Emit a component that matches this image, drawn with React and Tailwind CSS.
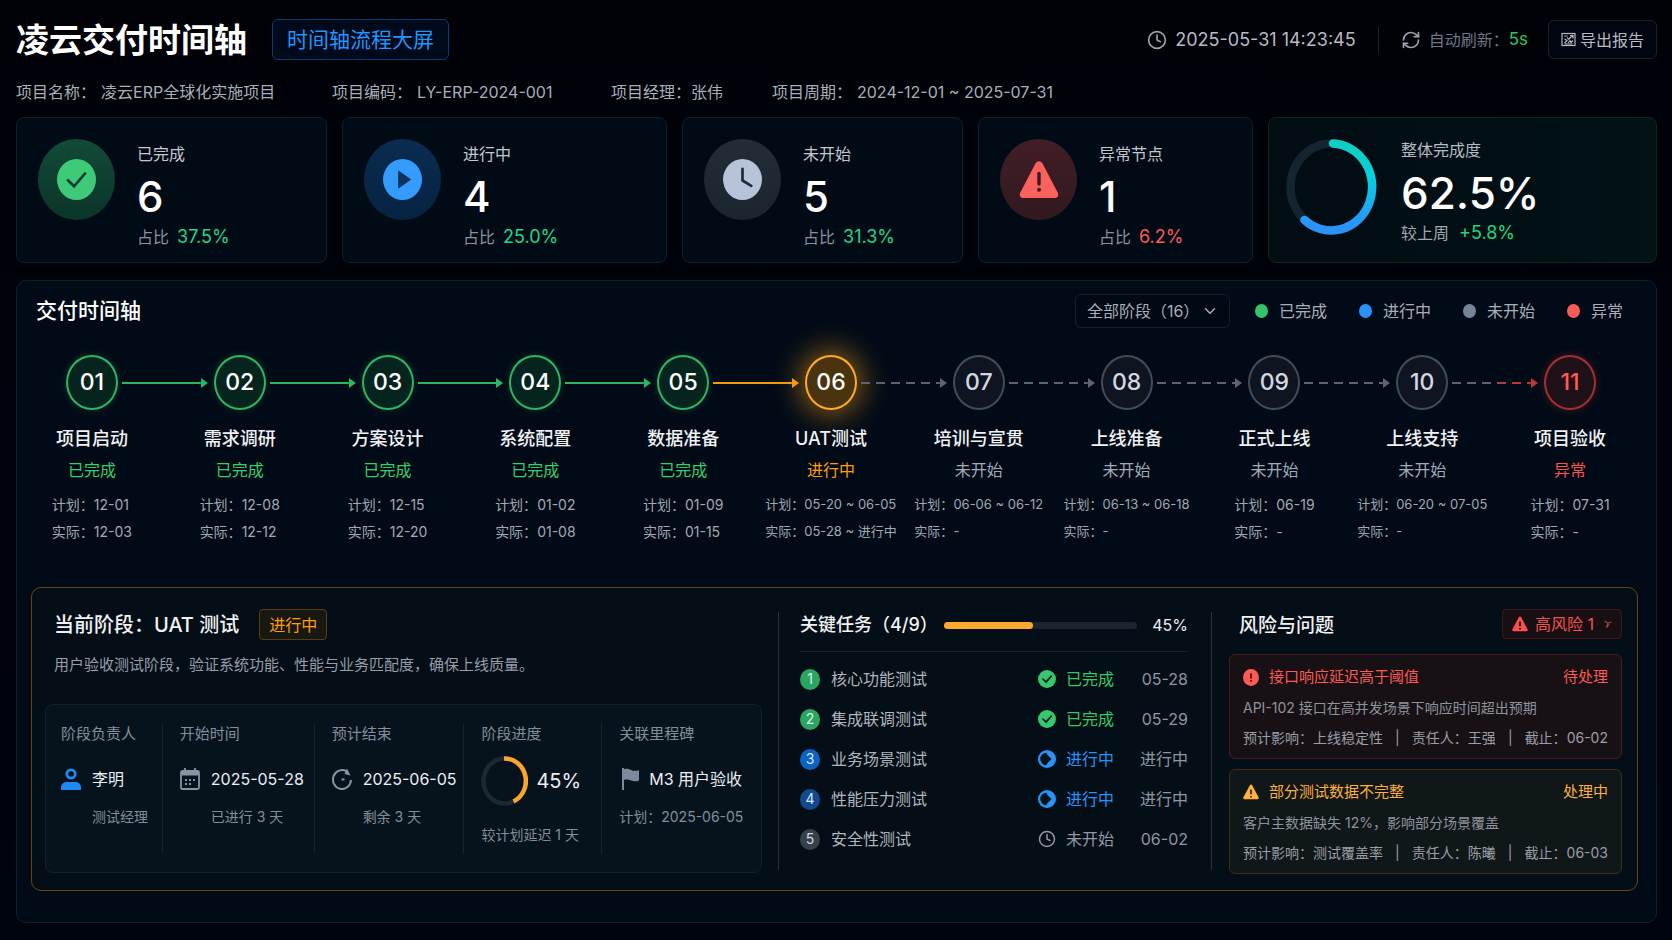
import { Clock, RefreshCw, ChevronDown } from "lucide-react";

const summary = [
  { label: "已完成", value: "6", share: "37.5%", kind: "done", halo: "bg-linear-to-b from-[#124a38] to-[#0b3529]", tone: "text-[#1fd68a]" },
  { label: "进行中", value: "4", share: "25.0%", kind: "active", halo: "bg-linear-to-b from-[#0a2c50] to-[#062342]", tone: "text-[#1fd68a]" },
  { label: "未开始", value: "5", share: "31.3%", kind: "idle", halo: "bg-linear-to-b from-[#222d38] to-[#1a2530]", tone: "text-[#1fd68a]" },
  { label: "异常节点", value: "1", share: "6.2%", kind: "error", halo: "bg-linear-to-b from-[#421e25] to-[#30191f]", tone: "text-[#fb5a55]" },
];

const steps = [
  { no: "01", name: "项目启动", state: "done", plan: "12-01", real: "12-03" },
  { no: "02", name: "需求调研", state: "done", plan: "12-08", real: "12-12" },
  { no: "03", name: "方案设计", state: "done", plan: "12-15", real: "12-20" },
  { no: "04", name: "系统配置", state: "done", plan: "01-02", real: "01-08" },
  { no: "05", name: "数据准备", state: "done", plan: "01-09", real: "01-15" },
  { no: "06", name: "UAT测试", state: "active", plan: "05-20 ~ 06-05", real: "05-28 ~ 进行中" },
  { no: "07", name: "培训与宣贯", state: "idle", plan: "06-06 ~ 06-12", real: "-" },
  { no: "08", name: "上线准备", state: "idle", plan: "06-13 ~ 06-18", real: "-" },
  { no: "09", name: "正式上线", state: "idle", plan: "06-19", real: "-" },
  { no: "10", name: "上线支持", state: "idle", plan: "06-20 ~ 07-05", real: "-" },
  { no: "11", name: "项目验收", state: "error", plan: "07-31", real: "-" },
];

const stepStyle = {
  done: {
    label: "已完成",
    text: "text-[#36cf6c]",
    node: "border-[#2db563] bg-[#06241e] text-white shadow-[0_0_8px_rgba(45,181,99,0.2)]",
    link: "#2db563",
  },
  active: {
    label: "进行中",
    text: "text-[#ff9d0a]",
    node: "border-[#ffab24] bg-[#4a3410] text-white shadow-[0_0_28px_6px_rgba(255,160,20,0.5)]",
    link: "#f59a0c",
  },
  idle: {
    label: "未开始",
    text: "text-[#a3a9b8]",
    node: "border-[#434b5a] bg-[#0e1420] text-[#d3d7e0]",
    link: "#5b6474",
  },
  error: {
    label: "异常",
    text: "text-[#ff4f4a]",
    node: "border-[#a32f33] bg-[#1f1118] text-[#ff5a55] shadow-[0_0_10px_rgba(200,50,50,0.3)]",
    link: "#b8393b",
  },
};

const legend = [
  { label: "已完成", dot: "bg-[#35c46e]" },
  { label: "进行中", dot: "bg-[#2b92fa]" },
  { label: "未开始", dot: "bg-[#77839b]" },
  { label: "异常", dot: "bg-[#f95c58]" },
];

const tasks = [
  { no: 1, name: "核心功能测试", state: "done", date: "05-28", badge: "bg-[#2ba562] text-[#d5f5e1]" },
  { no: 2, name: "集成联调测试", state: "done", date: "05-29", badge: "bg-[#2ba562] text-[#d5f5e1]" },
  { no: 3, name: "业务场景测试", state: "active", date: "进行中", badge: "bg-[#0d63c4] text-[#d8e9ff]" },
  { no: 4, name: "性能压力测试", state: "active", date: "进行中", badge: "bg-[#124a8c] text-[#d8e9ff]" },
  { no: 5, name: "安全性测试", state: "idle", date: "06-02", badge: "bg-[#37404b] text-[#d3d7e0]" },
];

const taskState = {
  done: { label: "已完成", text: "text-[#2fcb68]" },
  active: { label: "进行中", text: "text-[#2493fa]" },
  idle: { label: "未开始", text: "text-[#9299a6]" },
};

const risks = [
  {
    title: "接口响应延迟高于阈值",
    status: "待处理",
    desc: "API-102 接口在高并发场景下响应时间超出预期",
    impact: "上线稳定性",
    owner: "王强",
    due: "06-02",
    level: "high",
    box: "border-[#4a1a20] bg-[#171116]",
    tone: "text-[#fb5a55]",
  },
  {
    title: "部分测试数据不完整",
    status: "处理中",
    desc: "客户主数据缺失 12%，影响部分场景覆盖",
    impact: "测试覆盖率",
    owner: "陈曦",
    due: "06-03",
    level: "medium",
    box: "border-[#3d2e14] bg-[#101718]",
    tone: "text-[#ffb03a]",
  },
];

function SummaryIcon({ kind }) {
  if (kind === "error") {
    return (
      <svg className="h-10 w-10" viewBox="0 0 40 40" aria-hidden="true">
        <path d="M16.6 3.2a4 4 0 0 1 6.8 0l15.4 29.6c1.3 2.7-.4 5.2-3.2 5.2H4.4c-2.8 0-4.5-2.5-3.2-5.2z" fill="#fb625e" />
        <path d="M20 13.5v10.5" stroke="#3a1a20" strokeWidth="3.4" strokeLinecap="round" />
        <circle cx="20" cy="29.8" r="2" fill="#3a1a20" />
      </svg>
    );
  }
  const fill = { done: "#3fca78", active: "#359bfd", idle: "#b7c3d8" }[kind];
  return (
    <svg className="h-[41px] w-[39px]" viewBox="0 0 40 42" aria-hidden="true">
      <ellipse cx="20" cy="21" rx="20" ry="21" fill={fill} />
      {kind === "done" && <path d="m10.5 21 7 7L29.5 14" fill="none" stroke="#0d4032" strokeWidth="2.8" />}
      {kind === "active" && <path d="M15.5 11.5v19L29 21z" fill="#0a3263" />}
      {kind === "idle" && <path d="M20 10v12l9 5.5" fill="none" stroke="#222d38" strokeWidth="2.8" strokeLinecap="round" strokeLinejoin="round" />}
    </svg>
  );
}

function SummaryCard({ item }) {
  return (
    <section className="flex items-start gap-[22px] rounded-lg border border-[#0e202d] bg-[#010b15] pt-[21px] pl-[21px]">
      <div className={`flex h-[81px] w-[77px] shrink-0 items-center justify-center rounded-[50%] ${item.halo}`}>
        <SummaryIcon kind={item.kind} />
      </div>
      <div>
        <h2 className="text-base leading-[30px] text-[#c3c7d0]">{item.label}</h2>
        <p className="text-[42px] leading-14 font-medium text-white">{item.value}</p>
        <p className="flex items-center gap-2 text-base leading-6 text-[#8b91a0]">
          占比<span className={`text-lg leading-6 ${item.tone}`}>{item.share}</span>
        </p>
      </div>
    </section>
  );
}

function Triangle({ className, mark }) {
  return (
    <svg className={className} viewBox="0 0 16 16" aria-hidden="true">
      <path d="M7 1.1a1.15 1.15 0 0 1 2 0l6.6 12.2c.5 1-.1 1.9-1.1 1.9h-13c-1 0-1.6-.9-1.1-1.9z" fill="currentColor" />
      <path d="M8 5.5v4.8M8 12v1.4" stroke={mark} strokeWidth="1.7" />
    </svg>
  );
}

function Connector({ from, to }) {
  const dashed = from === "idle" || from === "active";
  const mixed = to === "error";
  const color = dashed ? stepStyle[to].link : to === "active" ? stepStyle.active.link : stepStyle.done.link;
  return (
    <div className="mr-1.5 ml-1 flex flex-1 items-center" aria-hidden="true">
      <svg className="h-0.5 min-w-0 flex-1" width="100%" height="2">
        {mixed && (
          <defs>
            <linearGradient id="link-fade" gradientUnits="userSpaceOnUse" x1="0" y1="0" x2="100%" y2="0">
              <stop offset="0.4" stopColor="#5b6474" />
              <stop offset="0.7" stopColor="#b8393b" />
            </linearGradient>
          </defs>
        )}
        <line x1="0" y1="1" x2="100%" y2="1" stroke={mixed ? "url(#link-fade)" : color} strokeWidth="2" strokeDasharray={dashed ? "9 6" : undefined} />
      </svg>
      <svg className="h-2.5 w-[7px]" viewBox="0 0 7 10">
        <path d="M0 0v10l7-5z" fill={color} />
      </svg>
    </div>
  );
}

function Fact({ label, icon, value, note, children }) {
  return (
    <div className="border-l border-[#14232e] pl-[17px] first:border-l-0 first:pl-[15px]">
      <dt className="text-[15px] leading-[22px] text-[#858d9c]">{label}</dt>
      {children || (
        <dd className="mt-[9px] grid grid-cols-[20px_1fr] items-center gap-x-[11px] whitespace-nowrap">
          {icon}
          <span className="flex h-[50px] items-center text-base text-[#eceef2]">{value}</span>
          <span className="col-start-2 mt-[3px] text-sm leading-5 text-[#858d9c]">{note}</span>
        </dd>
      )}
    </div>
  );
}

function TaskIcon({ state }) {
  if (state === "idle") return <Clock className="h-[18px] w-[18px] text-[#9299a6]" strokeWidth={2} aria-hidden="true" />;
  return (
    <svg className="h-[18px] w-[18px]" viewBox="0 0 20 20" aria-hidden="true">
      <circle cx="10" cy="10" r="10" fill={state === "done" ? "#35c86e" : "#2b92fa"} />
      {state === "done" ? (
        <path d="m5.5 10 3.5 3.5 5.8-6.7" fill="none" stroke="#06141a" strokeWidth="1.8" strokeLinecap="round" />
      ) : (
        <path d="M9.5 3A7 7 0 0 0 9.5 17L10 15 15 10 10 5z" fill="#06141a" />
      )}
    </svg>
  );
}

export default function App() {
  return (
    <div className="min-h-screen bg-linear-to-b from-[#000208] to-[#00040f] pt-[19px] pr-[15px] pb-4 pl-4 font-['Inter','Noto_Sans_CJK_SC',sans-serif] text-[#a9aeb9]">
      <header>
        <div className="flex h-[41px] items-center justify-between">
          <div className="flex items-center gap-[25px]">
            <h1 className="text-[33px] leading-10 font-bold text-white">凌云交付时间轴</h1>
            <span className="flex h-[41px] items-center rounded-md border border-[#0c3c70] bg-[#010a1a] px-[14px] text-[21px] text-[#2095fb]">时间轴流程大屏</span>
          </div>
          <div className="flex items-center">
            <Clock className="h-5 w-5 text-[#9aa0ad]" strokeWidth={2} aria-hidden="true" />
            <time className="ml-2 text-lg text-[#b6bac4]">2025-05-31 14:23:45</time>
            <span className="mx-[22px] h-[26px] w-px bg-[#1b222e]" />
            <RefreshCw className="h-5 w-5 text-[#9aa0ad]" strokeWidth={2} aria-hidden="true" />
            <span className="ml-2 text-base text-[#6f7583]">自动刷新：</span>
            <span className="text-[17px] text-[#27c85f]">5s</span>
            <button type="button" className="ml-5 flex h-[39px] items-center gap-1 rounded-md border border-[#17222f] bg-[#01050f] px-3 text-base text-[#b6bac4]">
              <svg className="h-[15px] w-[15px]" viewBox="0 0 15 15" fill="none" stroke="currentColor" strokeWidth="1.2" aria-hidden="true">
                <rect x="1" y="1.5" width="13" height="12" />
                <path d="M3.5 4h3M12 3 7.5 7.5M9 3.5h3v3M3.5 7l2.5 1.5L3.5 11M7 11l2-2.5 1 2 2-2M6 5.5 7.5 7.5M3.5 12h8" />
              </svg>
              导出报告
            </button>
          </div>
        </div>
        <dl className="mt-5 grid grid-cols-[316px_279px_161px_auto] justify-start text-base leading-6">
          <div className="flex gap-[5px]"><dt>项目名称：</dt><dd>凌云ERP全球化实施项目</dd></div>
          <div className="flex gap-[5px]"><dt>项目编码：</dt><dd>LY-ERP-2024-001</dd></div>
          <div className="flex"><dt>项目经理：</dt><dd>张伟</dd></div>
          <div className="flex gap-[5px]"><dt>项目周期：</dt><dd>2024-12-01 ~ 2025-07-31</dd></div>
        </dl>
      </header>

      <main>
        <div className="mt-[13px] grid grid-cols-[311fr_325fr_281fr_275fr_389fr] gap-[15px]">
          {summary.map((item) => <SummaryCard key={item.label} item={item} />)}
          <section className="flex h-[146px] items-center gap-6 rounded-lg border border-[#0d2629] bg-linear-to-r from-[#010c13] to-[#021215] pl-[17px]">
            <svg className="mb-1.5 h-24 w-[91px]" viewBox="0 0 91 96" fill="none" strokeWidth="8.5" aria-hidden="true">
              <defs>
                <linearGradient id="ring" x1="0" y1="0" x2="0" y2="1">
                  <stop offset="0.05" stopColor="#0fcfc5" />
                  <stop offset="0.4" stopColor="#05cfe0" />
                  <stop offset="0.95" stopColor="#2b92fa" />
                </linearGradient>
              </defs>
              <ellipse cx="45.5" cy="48" rx="41" ry="43.5" stroke="#142430" />
              <path d="M47 4.5A41 43.5 0 1 1 18.5 81" stroke="url(#ring)" strokeLinecap="round" />
            </svg>
            <div>
              <h2 className="text-base leading-[30px] text-[#b6bcc6]">整体完成度</h2>
              <p className="text-[44px] leading-14 font-medium text-white">62.5%</p>
              <p className="flex items-center gap-2.5 text-base leading-6 text-[#a0a6b2]">
                较上周<span className="text-lg leading-6 text-[#1fd67e]">+5.8%</span>
              </p>
            </div>
          </section>
        </div>

        <section className="mt-[17px] rounded-[10px] border border-[#0d1e2c] bg-[#010b17] pb-[31px]">
          <div className="flex items-center justify-between pt-[13px] pr-[33px] pl-[19px]">
            <h2 className="text-[21px] leading-[34px] font-medium text-white">交付时间轴</h2>
            <div className="flex items-center gap-[25px]">
              <div className="grid grid-cols-[1fr_29px] items-center text-[#a9aeb9]">
                <select aria-label="阶段筛选" className="col-span-2 col-start-1 row-start-1 h-[34px] w-[155px] appearance-none rounded-md border border-[#13212f] bg-[#010914] pr-7 pl-[11px] text-base">
                  <option>全部阶段（16）</option>
                </select>
                <ChevronDown className="pointer-events-none col-start-2 row-start-1 h-[18px] w-[18px]" strokeWidth={2} aria-hidden="true" />
              </div>
              <ul className="flex items-center gap-8 text-base">
                {legend.map((item) => (
                  <li key={item.label} className="flex items-center gap-[11px]">
                    <span className={`h-[14px] w-[13px] rounded-[50%] ${item.dot}`} />
                    {item.label}
                  </li>
                ))}
              </ul>
            </div>
          </div>

          <div className="pr-3 pl-px">
            <div className="mt-[27px] flex items-center px-[calc(100%/22-26px)]">
              {steps.map((step, i) => (
                <div key={step.no} className="flex flex-1 items-center first:flex-none">
                  {i > 0 && <Connector from={steps[i - 1].state} to={step.state} />}
                  <span className={`flex h-[55px] w-[52px] shrink-0 items-center justify-center rounded-[50%] border-2 text-[23px] font-medium ${stepStyle[step.state].node}`}>
                    {step.no}
                  </span>
                </div>
              ))}
            </div>
            <ol className="mt-[15px] grid grid-cols-11">
              {steps.map((step) => (
                <li key={step.no} className="flex flex-col items-center whitespace-nowrap">
                  <h3 className="text-lg leading-7 font-medium text-[#f1f2f5]">{step.name}</h3>
                  <p className={`mt-[5px] text-base leading-6 ${stepStyle[step.state].text}`}>{stepStyle[step.state].label}</p>
                  <div className={`mt-[9px] text-[#a3a8b4] ${step.plan.includes("~") ? "text-[13px]" : "text-sm"}`}>
                    <p className="leading-[27px]">计划：{step.plan}</p>
                    <p className="leading-[27px]">实际：{step.real}</p>
                  </div>
                </li>
              ))}
            </ol>
          </div>

          <div className="mt-[42px] mr-[18px] ml-[14px] grid grid-cols-[733fr_1px_432fr_1px_410fr] rounded-[10px] border border-[#684613] bg-[#040e16] pt-[21px] pr-[15px] pb-4 pl-[13px]">
            <section className="pr-4">
              <div className="flex items-center gap-5 pl-[9px]">
                <h2 className="text-xl leading-[30px] font-medium text-[#f1f2f5]">当前阶段：UAT 测试</h2>
                <span className="flex h-[31px] items-center rounded border border-[#5a3d10] bg-[#171811] px-[9px] text-base text-[#ff9d0a]">进行中</span>
              </div>
              <p className="mt-[13px] pl-[9px] text-[15px] leading-6 text-[#979daa]">用户验收测试阶段，验证系统功能、性能与业务匹配度，确保上线质量。</p>
              <dl className="mt-[27px] grid h-[169px] grid-cols-[116fr_152fr_150fr_138fr_160fr] rounded-lg border border-[#0f222d] bg-[#06131d] py-[18px]">
                <Fact
                  label="阶段负责人"
                  value="李明"
                  note="测试经理"
                  icon={
                    <svg className="h-[22px] w-5" viewBox="0 0 20 22" aria-hidden="true">
                      <circle cx="10" cy="6" r="4.2" fill="none" stroke="#1f88f5" strokeWidth="2.8" />
                      <path d="M0 22v-2.5C0 16 2.6 14 6 14h8c3.4 0 6 2 6 5.5V22z" fill="#1f88f5" />
                    </svg>
                  }
                />
                <Fact
                  label="开始时间"
                  value="2025-05-28"
                  note="已进行 3 天"
                  icon={
                    <svg className="h-[22px] w-5" viewBox="0 0 20 22" fill="none" stroke="#8a93a5" aria-hidden="true">
                      <rect x="1" y="3" width="18" height="18" rx="1.5" strokeWidth="1.8" />
                      <path d="M1 5.5h18" strokeWidth="4" />
                      <path d="M5 0v4M15 0v4" strokeWidth="1.8" />
                      <path d="M9 12h2M13 12h2M5 12h2M5 16h2M9 16h2" strokeWidth="2" />
                    </svg>
                  }
                />
                <Fact
                  label="预计结束"
                  value="2025-06-05"
                  note="剩余 3 天"
                  icon={
                    <svg className="h-[22px] w-5" viewBox="0 0 20 22" fill="none" stroke="#8a93a5" strokeWidth="2" aria-hidden="true">
                      <path d="M14.5 3.3A9 9.5 0 1 0 19 12" />
                      <path d="M15 .5 18.5 7.5 12.5 6z" fill="#8a93a5" stroke="none" />
                      <path d="M9.5 11.5h3" />
                    </svg>
                  }
                />
                <Fact label="阶段进度">
                  <dd className="mt-[11px] whitespace-nowrap">
                    <div className="flex h-[50px] items-center gap-2">
                      <svg className="h-[50px] w-[47px]" viewBox="0 0 47 50" fill="none" strokeWidth="4.5" aria-hidden="true">
                        <ellipse cx="23.5" cy="25" rx="21" ry="22.5" stroke="#1c2833" />
                        <path d="M23 2.5A21 22.5 0 0 1 32.5 45.5" stroke="#fba52d" />
                      </svg>
                      <span className="text-xl text-[#eceef2]">45%</span>
                    </div>
                    <p className="mt-[19px] text-sm leading-5 text-[#858d9c]">较计划延迟 1 天</p>
                  </dd>
                </Fact>
                <Fact label="关联里程碑">
                  <dd className="mt-[9px] whitespace-nowrap">
                    <div className="flex h-[50px] items-center gap-2.5 pl-[3px]">
                      <svg className="h-[22px] w-[17px]" viewBox="0 0 17 22" aria-hidden="true">
                        <path d="M0 0h2v1.2C5 .2 7 1 9 2c2.5 1.2 5 1 8 .2V12.5c-3 1.2-5.5 1-8 0-2.5-.9-4.5-1.2-7-.5V22H0z" fill="#7e899d" />
                      </svg>
                      <span className="text-base text-[#eceef2]">M3 用户验收</span>
                    </div>
                    <p className="mt-[3px] text-sm leading-5 text-[#858d9c]">计划：2025-06-05</p>
                  </dd>
                </Fact>
              </dl>
            </section>

            <span className="mt-[3px] mb-1 bg-[#28313a]" />

            <section className="pr-[23px] pl-[21px]">
              <div className="mt-px flex items-center border-b border-[#162028] pb-[11px]">
                <h2 className="text-lg leading-[30px] font-medium whitespace-nowrap text-[#f1f2f5]">关键任务（4/9）</h2>
                <div role="progressbar" aria-label="关键任务进度" aria-valuenow={45} aria-valuemin={0} aria-valuemax={100} className="mr-[15px] ml-1.5 h-[7px] flex-1 rounded-full bg-[#1b2431]">
                  <div className="h-full w-[46%] rounded-full bg-[#fca72d]" />
                </div>
                <span className="text-base text-[#eceef2]">45%</span>
              </div>
              <table className="mt-[7px] w-full text-base whitespace-nowrap">
                <tbody>
                  {tasks.map((task) => (
                    <tr key={task.no} className="h-10">
                      <td className="w-[31px] p-0">
                        <span className={`flex h-[21px] w-5 items-center justify-center rounded-[50%] text-sm leading-none ${task.badge}`}>{task.no}</span>
                      </td>
                      <td className="p-0 leading-6 text-[#b0b5bf]">{task.name}</td>
                      <td className="w-[98px] p-0">
                        <span className={`flex items-center gap-2.5 leading-6 ${taskState[task.state].text}`}>
                          <TaskIcon state={task.state} />
                          {taskState[task.state].label}
                        </span>
                      </td>
                      <td className="w-[52px] p-0 text-right leading-6 text-[#8f96a3]">{task.date}</td>
                    </tr>
                  ))}
                </tbody>
              </table>
            </section>

            <span className="mt-[3px] mb-1 bg-[#28313a]" />

            <section className="pl-[17px]">
              <div className="flex h-[30px] items-center justify-between pl-2.5">
                <h2 className="pt-[3px] text-[19px] leading-[27px] font-medium text-[#f1f2f5]">风险与问题</h2>
                <button type="button" className="flex h-[30px] items-center rounded border border-[#3b171d] bg-[#180f15] px-[9px] text-base text-[#f4524f]">
                  <Triangle className="mr-[7px] h-4 w-4" mark="#180f15" />
                  高风险 1
                  <svg className="ml-2.5 h-2.5 w-2" viewBox="0 0 8 10" fill="none" stroke="#a83c3e" strokeWidth="1.3" aria-hidden="true">
                    <path d="M.5 2 4 4l3.5-1M4 4 2.5 8.5 5 5.5" />
                  </svg>
                </button>
              </div>
              <ul className="mt-[15px] flex flex-col gap-2.5">
                {risks.map((risk) => (
                  <li key={risk.title} className={`rounded-md border px-[13px] pt-2.5 pb-[9px] ${risk.box}`}>
                    <div className={`flex items-center text-[15px] leading-6 ${risk.tone}`}>
                      {risk.level === "high" ? (
                        <svg className="h-[17px] w-4" viewBox="0 0 16 17" aria-hidden="true">
                          <ellipse cx="8" cy="8.5" rx="8" ry="8.5" fill="currentColor" />
                          <path d="M8 4.3v5.5M8 11v1.8" stroke="#3a1218" strokeWidth="1.6" />
                        </svg>
                      ) : (
                        <Triangle className="h-4 w-4" mark="#2a2310" />
                      )}
                      <h3 className="ml-2.5 flex-1">{risk.title}</h3>
                      <span>{risk.status}</span>
                    </div>
                    <p className="mt-2 text-sm leading-[22px] text-[#8f939c]">{risk.desc}</p>
                    <p className="mt-2 flex justify-between text-sm leading-[22px] whitespace-nowrap text-[#9a9ea7]">
                      <span>预计影响：{risk.impact}</span>
                      <span>|</span>
                      <span>责任人：{risk.owner}</span>
                      <span>|</span>
                      <span>截止：{risk.due}</span>
                    </p>
                  </li>
                ))}
              </ul>
            </section>
          </div>
        </section>
      </main>
    </div>
  );
}
